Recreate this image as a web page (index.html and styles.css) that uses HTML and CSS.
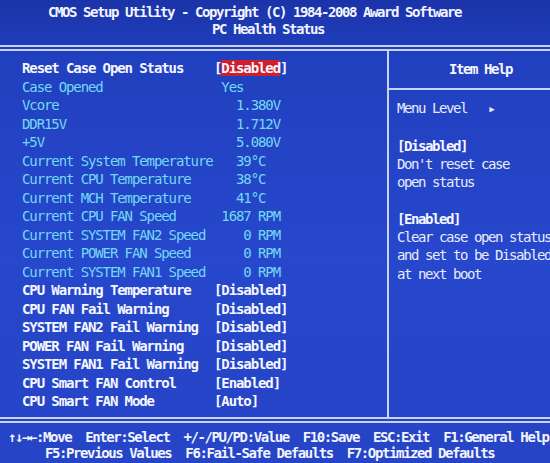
FILE: index.html
```
<!DOCTYPE html>
<html lang="en">
<head>
<meta charset="utf-8">
<title>CMOS Setup Utility - PC Health Status</title>
<link rel="stylesheet" href="styles.css">
</head>
<body>
<div class="screen">
  <header class="title">
    <div class="title-main">CMOS Setup Utility - Copyright (C) 1984-2008 Award Software</div>
    <div class="title-sub">PC Health Status</div>
  </header>
  <div class="frame">
    <main class="settings">
      <div class="row bright"><span class="label">Reset Case Open Status</span><span class="value">[<span class="sel">Disabled</span>]</span></div>
      <div class="row info"><span class="label">Case Opened</span><span class="value"> Yes</span></div>
      <div class="row info"><span class="label">Vcore</span><span class="value">   1.380V</span></div>
      <div class="row info"><span class="label">DDR15V</span><span class="value">   1.712V</span></div>
      <div class="row info"><span class="label">+5V</span><span class="value">   5.080V</span></div>
      <div class="row info"><span class="label">Current System Temperature</span><span class="value">   39°C</span></div>
      <div class="row info"><span class="label">Current CPU Temperature</span><span class="value">   38°C</span></div>
      <div class="row info"><span class="label">Current MCH Temperature</span><span class="value">   41°C</span></div>
      <div class="row info"><span class="label">Current CPU FAN Speed</span><span class="value"> 1687 RPM</span></div>
      <div class="row info"><span class="label">Current SYSTEM FAN2 Speed</span><span class="value">    0 RPM</span></div>
      <div class="row info"><span class="label">Current POWER FAN Speed</span><span class="value">    0 RPM</span></div>
      <div class="row info"><span class="label">Current SYSTEM FAN1 Speed</span><span class="value">    0 RPM</span></div>
      <div class="row bright"><span class="label">CPU Warning Temperature</span><span class="value">[Disabled]</span></div>
      <div class="row bright"><span class="label">CPU FAN Fail Warning</span><span class="value">[Disabled]</span></div>
      <div class="row bright"><span class="label">SYSTEM FAN2 Fail Warning</span><span class="value">[Disabled]</span></div>
      <div class="row bright"><span class="label">POWER FAN Fail Warning</span><span class="value">[Disabled]</span></div>
      <div class="row bright"><span class="label">SYSTEM FAN1 Fail Warning</span><span class="value">[Disabled]</span></div>
      <div class="row bright"><span class="label">CPU Smart FAN Control</span><span class="value">[Enabled]</span></div>
      <div class="row bright"><span class="label">CPU Smart FAN Mode</span><span class="value">[Auto]</span></div>
    </main>
    <aside class="help">
      <div class="help-title">Item Help</div>
      <div class="help-body">
        <p class="help-group">Menu Level   <span class="arrow">&#9656;</span></p>
        <p class="help-group"><span class="opt">[Disabled]</span><br>Don't reset case<br>open status</p>
        <p class="help-group"><span class="opt">[Enabled]</span><br>Clear case open status<br>and set to be Disabled<br>at next boot</p>
      </div>
    </aside>
  </div>
  <footer class="keys">
    <div class="keys-line">↑↓→←:Move  Enter:Select  +/-/PU/PD:Value  F10:Save  ESC:Exit  F1:General Help</div>
    <div class="keys-line keys-line2">F5:Previous Values  F6:Fail-Safe Defaults  F7:Optimized Defaults</div>
  </footer>
</div>
</body>
</html>
```
FILE: styles.css
```
* {
  box-sizing: border-box;
  margin: 0;
  padding: 0;
}

html, body {
  width: 550px;
  height: 463px;
  overflow: hidden;
}

body {
  background: linear-gradient(180deg, #1a33a8 0%, #2140bf 12%, #2747cc 55%, #2544c6 100%);
  font-family: "DejaVu Sans Mono", "Liberation Mono", monospace;
  font-size: 14px;
  color: #eef1ff;
}

.screen {
  width: 550px;
  height: 463px;
}

.title {
  height: 45px;
  padding-top: 4px;
  font-weight: bold;
  line-height: 17px;
  letter-spacing: -1.43px;
  color: #f2f4ff;
}

.title-main,
.title-sub {
  white-space: pre;
}

.title-main {
  padding-left: 48px;
}

.title-sub {
  padding-left: 212px;
}

.frame {
  display: grid;
  grid-template-columns: 387px 1fr;
  height: 378px;
  border-top: 6px double #c9d3f5;
  border-bottom: 6px double #c9d3f5;
}

.settings {
  padding: 8px 0 0 22px;
  letter-spacing: -1.1px;
}

.row {
  display: grid;
  grid-template-columns: 192px auto;
  line-height: 18.5px;
}

.label,
.value {
  white-space: pre;
}

.row.info {
  color: #72d9f4;
}

.row.bright {
  color: #f5f7ff;
  font-weight: bold;
}

.sel {
  background: #cf1f2b;
}

.help {
  border-left: 2px solid #c9d3f5;
  letter-spacing: -1.43px;
  color: #e8ecfb;
  overflow: hidden;
}

.help-title {
  height: 39px;
  border-bottom: 2px solid #c9d3f5;
  padding-left: 60px;
  line-height: 37px;
  font-weight: bold;
  color: #f5f7ff;
}

.help-body {
  padding: 9px 0 0 8px;
  line-height: 18.3px;
}

.help-group {
  margin-bottom: 18.3px;
  white-space: pre;
}

.opt {
  font-weight: bold;
  color: #f5f7ff;
}

.arrow {
  font-size: 13px;
}

.keys {
  padding: 6px 0 0 8px;
  line-height: 16px;
  font-weight: bold;
  letter-spacing: -1.41px;
  color: #f2f4ff;
}

.keys-line {
  white-space: pre;
}

.keys-line2 {
  padding-left: 37px;
}
```
